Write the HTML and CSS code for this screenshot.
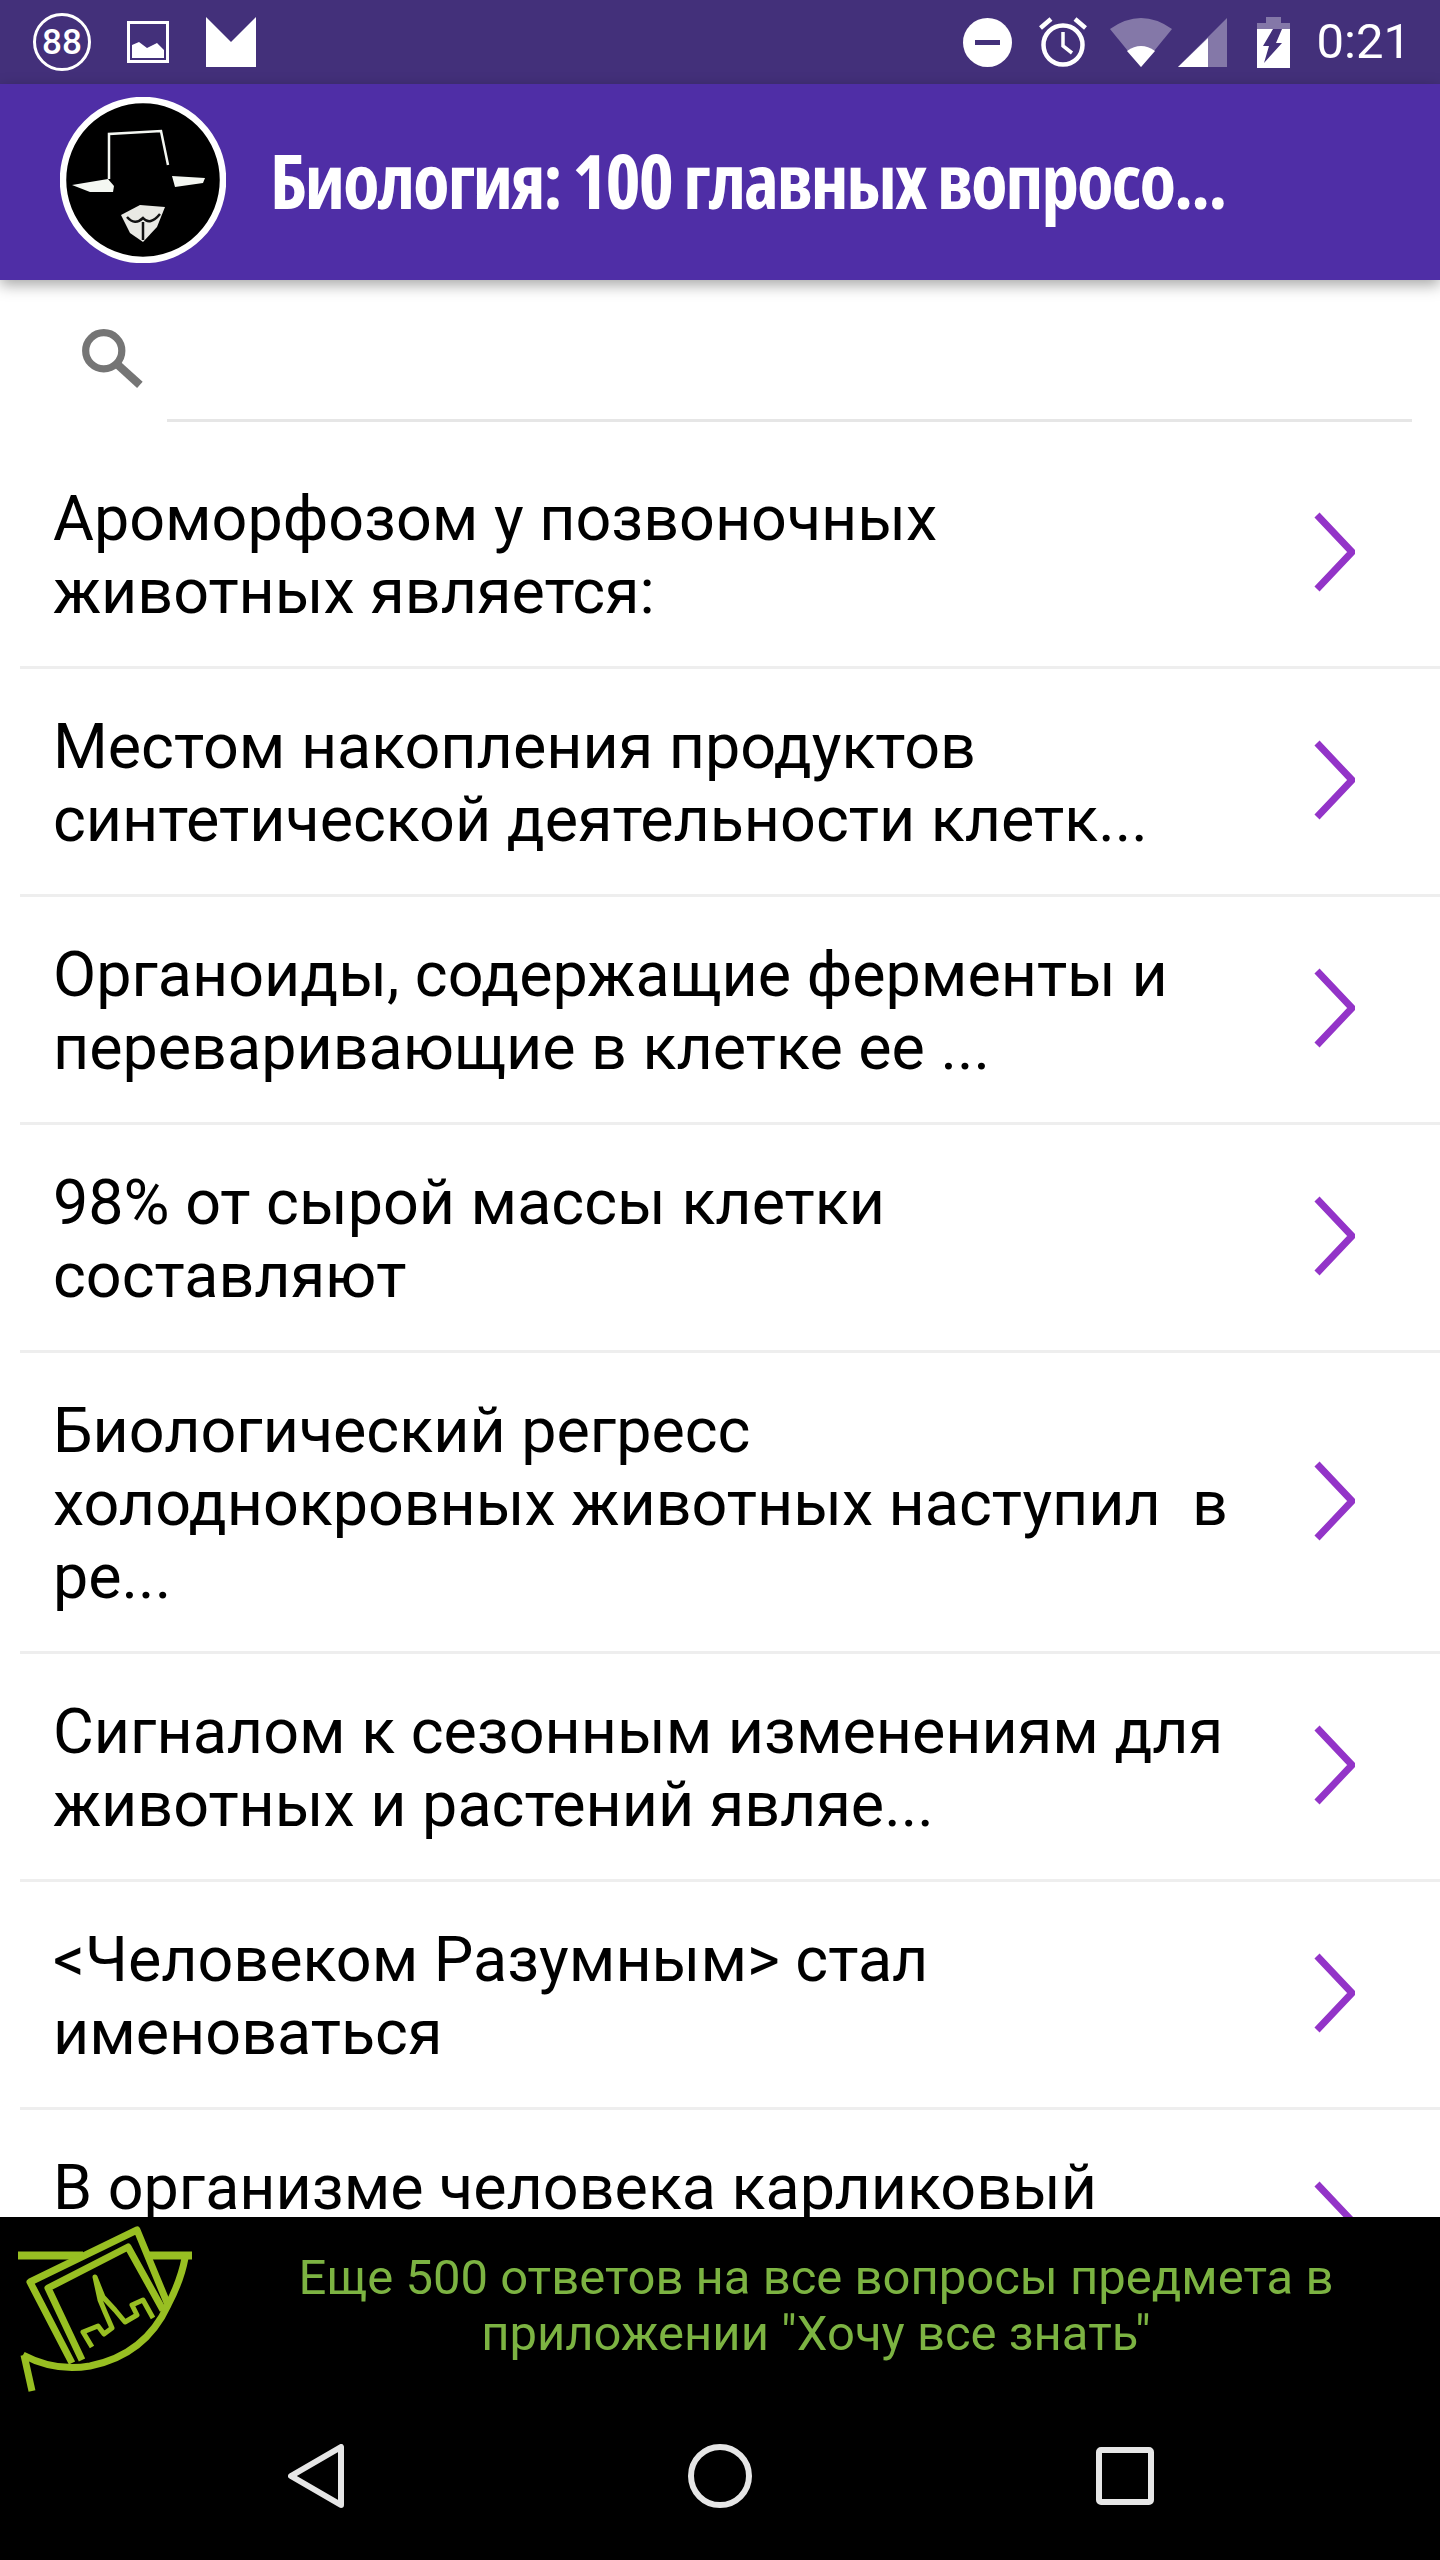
FILE: index.html
```html
<!DOCTYPE html>
<html lang="ru">
<head>
    <meta charset="UTF-8">
    <meta name="viewport" content="width=device-width, initial-scale=1.0">
    <title>Биология</title>
    <link rel="stylesheet" href="styles.css">
</head>
<body>
<div class="screen">
    <div class="status">
        <span class="badge">88</span>
        <svg class="ic-pic" width="42" height="42" viewBox="0 0 42 42">
            <rect x="1.5" y="1.5" width="39" height="39" fill="none" stroke="#fff" stroke-width="3"/>
            <polygon points="5,37 5,24 12,21 20,27 30,22 37,29 37,37" fill="#fff"/>
        </svg>
        <svg class="ic-mail" width="50" height="50" viewBox="0 0 50 50">
            <polygon points="0,0 25,25 50,0 50,50 0,50" fill="#fff"/>
        </svg>
        <div class="status-right">
            <svg width="49" height="49" viewBox="0 0 49 49">
                <circle cx="24.5" cy="24.5" r="24.5" fill="#fff"/>
                <rect x="12" y="22" width="25" height="5" fill="#43307a"/>
            </svg>
            <svg class="ic-alarm" width="48" height="50" viewBox="0 0 48 50">
                <circle cx="24" cy="28" r="19.5" fill="none" stroke="#fff" stroke-width="4.5"/>
                <polyline points="24,15 24,29 33,36" fill="none" stroke="#fff" stroke-width="3.5"/>
                <path d="M1.5 11 L12 2 M46.5 11 L36 2" stroke="#fff" stroke-width="4.5"/>
            </svg>
            <svg class="ic-wifi" width="62" height="49" viewBox="0 0 62 49">
                <path d="M0 11 Q31 -11 62 11 L31 49 Z" fill="#fff" opacity="0.35"/>
                <path d="M17 33 Q31 23 45 33 L31 49 Z" fill="#fff"/>
            </svg>
            <svg class="ic-signal" width="49" height="49" viewBox="0 0 49 49">
                <polygon points="49,0 49,49 0,49" fill="#fff" opacity="0.35"/>
                <polygon points="30,20 30,49 0,49" fill="#fff"/>
            </svg>
            <svg class="ic-battery" width="33" height="51" viewBox="0 0 33 51">
                <path d="M9 0 H24 V6 H33 V12 H0 V6 H9 Z" fill="#fff" opacity="0.35"/>
                <rect y="12" width="33" height="39" fill="#fff"/>
                <polygon points="16,12 25,12 19,26 25,26 7,46 12,29 6,29" fill="#43307a"/>
            </svg>
            <span class="clock">0:21</span>
        </div>
    </div>

    <div class="appbar">
        <svg class="avatar" width="166" height="166" viewBox="60 97 166 166">
            <circle cx="143" cy="180" r="80" fill="#000" stroke="#fff" stroke-width="6.5"/>
            <path d="M109 179 L109 134 L161 131 L168 165" fill="none" stroke="#f4f7f2" stroke-width="2.5"/>
            <polygon points="72,185 108,179 114,186 113,192 90,192" fill="#f4f7f2"/>
            <polygon points="172,176 205,178 203,183 175,187" fill="#f4f7f2"/>
            <polygon points="121,215 140,205 165,207 157,227 143,242 130,233" fill="#e9e9e4"/>
            <path d="M127 217 Q135 226 143 218 Q150 226 160 214 M143 222 V240" fill="none" stroke="#111" stroke-width="2.5"/>
        </svg>
        <h1 class="title">Биология: 100 главных вопросо...</h1>
    </div>

    <div class="search">
        <svg class="search-icon" width="64" height="62" viewBox="0 0 62 60">
            <circle cx="23" cy="23" r="17.5" fill="none" stroke="#757575" stroke-width="7"/>
            <line x1="36" y1="36" x2="58" y2="56" stroke="#757575" stroke-width="8"/>
        </svg>
        <div class="search-field"></div>
    </div>

    <div class="list">
        <div class="row">
            <p class="row-text">Ароморфозом у позвоночных<br>животных является:</p>
            <svg class="chev" width="41" height="80" viewBox="0 0 41 80"><polyline points="3,3 38,40 3,77" fill="none" stroke="#9334c8" stroke-width="7"/></svg>
        </div>
        <div class="row">
            <p class="row-text">Местом накопления продуктов<br>синтетической деятельности клетк...</p>
            <svg class="chev" width="41" height="80" viewBox="0 0 41 80"><polyline points="3,3 38,40 3,77" fill="none" stroke="#9334c8" stroke-width="7"/></svg>
        </div>
        <div class="row">
            <p class="row-text">Органоиды, содержащие ферменты и<br>переваривающие в клетке ее ...</p>
            <svg class="chev" width="41" height="80" viewBox="0 0 41 80"><polyline points="3,3 38,40 3,77" fill="none" stroke="#9334c8" stroke-width="7"/></svg>
        </div>
        <div class="row">
            <p class="row-text">98% от сырой массы клетки<br>составляют</p>
            <svg class="chev" width="41" height="80" viewBox="0 0 41 80"><polyline points="3,3 38,40 3,77" fill="none" stroke="#9334c8" stroke-width="7"/></svg>
        </div>
        <div class="row">
            <p class="row-text">Биологический регресс<br>холоднокровных животных наступил  в<br>ре...</p>
            <svg class="chev" width="41" height="80" viewBox="0 0 41 80"><polyline points="3,3 38,40 3,77" fill="none" stroke="#9334c8" stroke-width="7"/></svg>
        </div>
        <div class="row">
            <p class="row-text">Сигналом к сезонным изменениям для<br>животных и растений являе...</p>
            <svg class="chev" width="41" height="80" viewBox="0 0 41 80"><polyline points="3,3 38,40 3,77" fill="none" stroke="#9334c8" stroke-width="7"/></svg>
        </div>
        <div class="row">
            <p class="row-text">&lt;Человеком Разумным&gt; стал<br>именоваться</p>
            <svg class="chev" width="41" height="80" viewBox="0 0 41 80"><polyline points="3,3 38,40 3,77" fill="none" stroke="#9334c8" stroke-width="7"/></svg>
        </div>
        <div class="row">
            <p class="row-text">В организме человека карликовый<br>&nbsp;</p>
            <svg class="chev" width="41" height="80" viewBox="0 0 41 80"><polyline points="3,3 38,40 3,77" fill="none" stroke="#9334c8" stroke-width="7"/></svg>
        </div>
    </div>

    <div class="banner">
        <svg class="logo" width="192" height="175" viewBox="0 17 192 175">
            <g fill="none" stroke="#98bf22" stroke-width="7" stroke-linejoin="round">
                <path d="M18 55.5 H83 M148 55.5 H193" stroke-width="8"/>
                <path d="M72 163 L30 82 L137 30 L168 105"/>
                <path d="M82 160 L48 88 L128 47 L163 110"/>
                <path d="M23 155 Q55 172 90 166 Q145 155 168 105 Q181 80 185 58"/>
                <path d="M24 155 L32 191" stroke-width="7"/>
                <path d="M92 147 L83 132 L98 126 L104 134 L112 128 L105 112 L100 100 L95 77 L103 97 L115 110 L125 122 L137 115 L132 105 L143 100 L153 118" stroke-width="5"/>
            </g>
        </svg>
        <p class="banner-text">Еще 500 ответов на все вопросы предмета в<br>приложении "Хочу все знать"</p>
    </div>

    <div class="navbar">
        <svg width="56" height="64" viewBox="0 0 56 64">
            <path d="M53 3 V61 L3 32 Z" fill="none" stroke="#e6e6e6" stroke-width="6" stroke-linejoin="round"/>
        </svg>
        <svg width="64" height="64" viewBox="0 0 64 64">
            <circle cx="32" cy="32" r="29" fill="none" stroke="#e6e6e6" stroke-width="6"/>
        </svg>
        <svg width="58" height="58" viewBox="0 0 58 58">
            <rect x="3" y="3" width="52" height="52" rx="2" fill="none" stroke="#e6e6e6" stroke-width="6"/>
        </svg>
    </div>
</div>
</body>
</html>
```

FILE: styles.css
```css
body {
    margin: 0;
    padding: 0;
    font-family: Roboto, "Liberation Sans", sans-serif;
    background-color: #fff;
}

.screen {
    width: 1440px;
    height: 2560px;
    display: flex;
    flex-direction: column;
    overflow: hidden;
}

/* status bar */
.status {
    height: 84px;
    flex: none;
    display: flex;
    align-items: center;
    padding: 0 29px 0 33px;
    background-color: #43307a;
    color: #fff;
}

.badge {
    width: 52px;
    height: 52px;
    border: 3px solid #fff;
    border-radius: 50%;
    display: flex;
    align-items: center;
    justify-content: center;
    font-size: 35px;
    font-weight: 500;
}

.ic-pic {
    margin-left: 36px;
}

.ic-mail {
    margin-left: 37px;
}

.status-right {
    margin-left: auto;
    display: flex;
    align-items: center;
}

.ic-alarm {
    margin-left: 27px;
}

.ic-wifi {
    margin-left: 23px;
}

.ic-signal {
    margin-left: 6px;
}

.ic-battery {
    margin-left: 30px;
}

.clock {
    margin-left: 27px;
    font-size: 49px;
    line-height: 50px;
}

/* app bar */
.appbar {
    position: relative;
    height: 196px;
    flex: none;
    box-sizing: border-box;
    display: flex;
    align-items: center;
    padding: 0 0 4px 60px;
    background-color: #4f2ea6;
    box-shadow: 0 5px 14px rgba(0, 0, 0, 0.35);
}

.title {
    margin: 0 0 0 44px;
    font-family: "Open Sans", sans-serif;
    font-stretch: condensed;
    font-size: 75px;
    font-weight: 700;
    letter-spacing: -2px;
    color: #fff;
    white-space: nowrap;
}

/* search */
.search {
    height: 161px;
    flex: none;
    box-sizing: border-box;
    display: flex;
    padding: 47px 28px 0 80px;
}

.search-icon {
    flex: none;
}

.search-field {
    flex: 1;
    height: 95px;
    margin-left: 23px;
    border-bottom: 3px solid #e6e6e6;
    box-sizing: border-box;
}

/* list */
.list {
    flex: 1;
    min-height: 0;
    overflow: hidden;
    padding-left: 20px;
}

.row {
    display: flex;
    align-items: center;
    justify-content: space-between;
    padding: 41px 85px 38px 33px;
    border-bottom: 3px solid #eee;
}

.row-text {
    margin: 0;
    font-size: 62.8px;
    line-height: 73px;
    color: #000;
    white-space: pre-wrap;
}

.chev {
    flex: none;
    margin-bottom: 6px;
}

/* bottom banner */
.banner {
    height: 175px;
    flex: none;
    display: flex;
    background-color: #000;
}

.logo {
    flex: none;
}

.banner-text {
    flex: 1;
    margin: 33px 0 0;
    font-size: 49px;
    line-height: 56px;
    text-align: center;
    color: #7cb342;
}

/* nav buttons */
.navbar {
    height: 168px;
    flex: none;
    box-sizing: border-box;
    display: flex;
    align-items: center;
    justify-content: space-between;
    padding: 0 286px 0 288px;
    background-color: #000;
}
```
